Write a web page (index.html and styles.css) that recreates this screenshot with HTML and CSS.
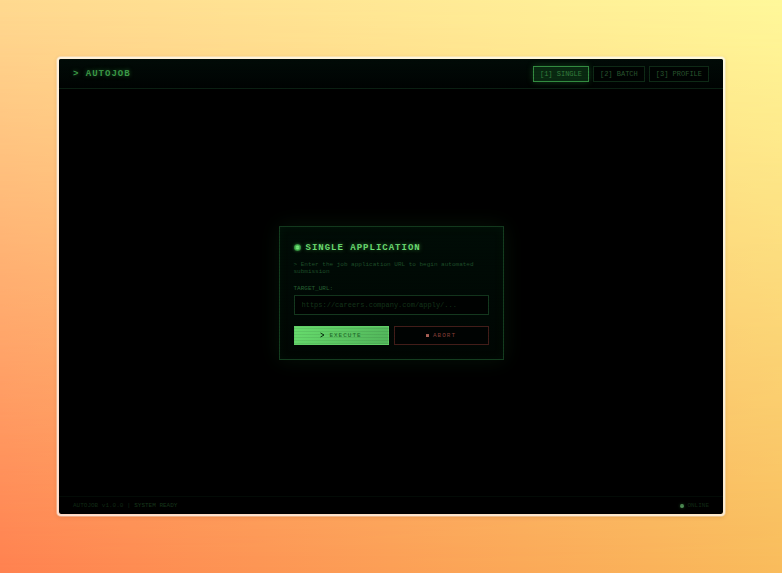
FILE: index.html
```html
<!DOCTYPE html>
<html lang="en">
<head>
<meta charset="utf-8">
<title>AutoJob</title>
<link rel="stylesheet" href="styles.css">
</head>
<body>
<div class="window">
  <header class="topbar">
    <h1 class="brand">&gt; AUTOJOB</h1>
    <nav class="tabs">
      <button type="button" class="tab tab-active">[1] SINGLE</button>
      <button type="button" class="tab">[2] BATCH</button>
      <button type="button" class="tab">[3] PROFILE</button>
    </nav>
  </header>
  <main class="stage">
    <form class="card">
      <h2 class="title"><span class="orb"></span>SINGLE APPLICATION</h2>
      <p class="hint">&gt; Enter the job application URL to begin automated submission</p>
      <label class="label" for="url">TARGET_URL:</label>
      <input class="field" id="url" type="url" placeholder="https://careers.company.com/apply/...">
      <div class="actions">
        <button type="button" class="action execute"><svg class="icon" viewBox="0 0 5 6"><path d="M.5 1 4 3 .5 5" /></svg>EXECUTE</button>
        <button type="button" class="action abort"><span class="stop"></span>ABORT</button>
      </div>
    </form>
  </main>
  <footer class="status">
    <span>AUTOJOB v1.0.0 | <span class="ready">SYSTEM READY</span></span>
    <span class="online"><span class="led"></span>ONLINE</span>
  </footer>
</div>
</body>
</html>
```

FILE: styles.css
```css
* {
  box-sizing: border-box;
}

body {
  position: relative;
  margin: 0;
  min-height: 100vh;
  padding: 57px;
  display: flex;
  font-family: "Liberation Mono", "Courier New", monospace;
  font-size: 6px;
  background: linear-gradient(to right, #ff8250, #f9bc5c);
}

/* Warm yellow that fades in towards the top of the backdrop */
body::before {
  content: "";
  position: absolute;
  inset: 0;
  background: linear-gradient(to right, #ffd990, #fff89a);
  mask-image: linear-gradient(to top, transparent, #000);
}

button,
input {
  font: inherit;
  margin: 0;
}

.window {
  position: relative;
  flex: 1;
  display: flex;
  flex-direction: column;
  border: 2px solid rgba(255, 255, 255, 0.65);
  border-radius: 4px;
  background: #000 padding-box;
  box-shadow: 0 0 0 1px rgba(255, 255, 255, 0.3), 0 1px 4px rgba(120, 60, 0, 0.2);
}

/* Scanlines over the whole terminal */
.window::after {
  content: "";
  position: absolute;
  inset: 0;
  border-radius: 2px;
  pointer-events: none;
  background: repeating-linear-gradient(to bottom, transparent 0 2px, rgba(0, 0, 0, 0.08) 2px 3px);
}

.topbar {
  display: flex;
  align-items: center;
  justify-content: space-between;
  height: 30px;
  padding: 0 14px;
  border-bottom: 1px solid #0b2213;
  border-radius: 2px 2px 0 0;
  background: linear-gradient(#010b07, #000302);
}

.brand {
  margin: 0;
  font-size: 9px;
  letter-spacing: 1px;
  color: #3c9b47;
  text-shadow: 0 0 4px rgba(60, 180, 75, 0.5);
}

.tabs {
  display: flex;
  gap: 4px;
}

.tab {
  height: 16px;
  padding: 0 6px;
  border: 1px solid #0e2a16;
  background: #000302;
  color: #29562f;
  font-size: 7px;
}

.tab-active {
  border-color: #338b40;
  background: #092911;
  color: #347d3d;
  box-shadow: 0 0 6px rgba(45, 150, 60, 0.4);
}

.stage {
  flex: 1;
  display: grid;
  place-items: center;
}

.card {
  width: 100%;
  max-width: 225px;
  padding: 14px;
  border: 1px solid #143d1f;
  background: linear-gradient(#000c06, #000603);
  box-shadow: 0 0 20px rgba(40, 120, 50, 0.16), inset 0 0 8px rgba(20, 80, 35, 0.12);
}

.title {
  display: flex;
  align-items: center;
  gap: 5px;
  height: 14px;
  margin: 0 0 6px;
  font-size: 9px;
  letter-spacing: 1px;
  color: #6bdc70;
  text-shadow: 0 0 4px rgba(80, 210, 90, 0.5);
}

.orb {
  width: 7px;
  height: 7px;
  border-radius: 50%;
  background: radial-gradient(circle, #72e878 0 25%, #3da548 50%, #2b7834 100%);
  box-shadow: 0 0 3px #286d30;
}

.hint {
  margin: 0 0 10px;
  line-height: 7px;
  color: #1f4f29;
}

.label {
  display: block;
  margin-bottom: 2px;
  line-height: 8px;
  color: #286534;
}

.field {
  display: block;
  width: 100%;
  height: 20px;
  padding: 0 7px;
  border: 1px solid #14381e;
  border-radius: 0;
  background: #000201;
  color: #55c560;
  font-size: 7px;
}

.field::placeholder {
  color: #14351a;
  opacity: 1;
}

.actions {
  display: grid;
  grid-template-columns: 1fr 1fr;
  gap: 5px;
  margin-top: 11px;
}

.action {
  display: flex;
  align-items: center;
  justify-content: center;
  gap: 4px;
  height: 19px;
  padding: 0;
  border: 1px solid;
  letter-spacing: 1px;
}

.execute {
  border-color: #61cf67;
  background: linear-gradient(135deg, #67dc6d, #51b45a);
  color: #1c6426;
}

.icon {
  width: 5px;
  height: 6px;
  fill: none;
  stroke: #082d0e;
  stroke-width: 1;
}

.abort {
  border-color: #421d19;
  background: #000302;
  color: #853e37;
}

.stop {
  width: 3px;
  height: 3px;
  background: #a85f55;
}

.status {
  display: flex;
  align-items: center;
  justify-content: space-between;
  height: 18px;
  padding: 0 14px;
  border-top: 1px solid #030c06;
  color: #102a15;
}

.ready {
  color: #17371b;
}

.online {
  display: flex;
  align-items: center;
  gap: 3px;
}

.led {
  width: 4px;
  height: 4px;
  border-radius: 50%;
  background: #4f8d54;
  box-shadow: 0 0 3px #1d4d23;
}
```
